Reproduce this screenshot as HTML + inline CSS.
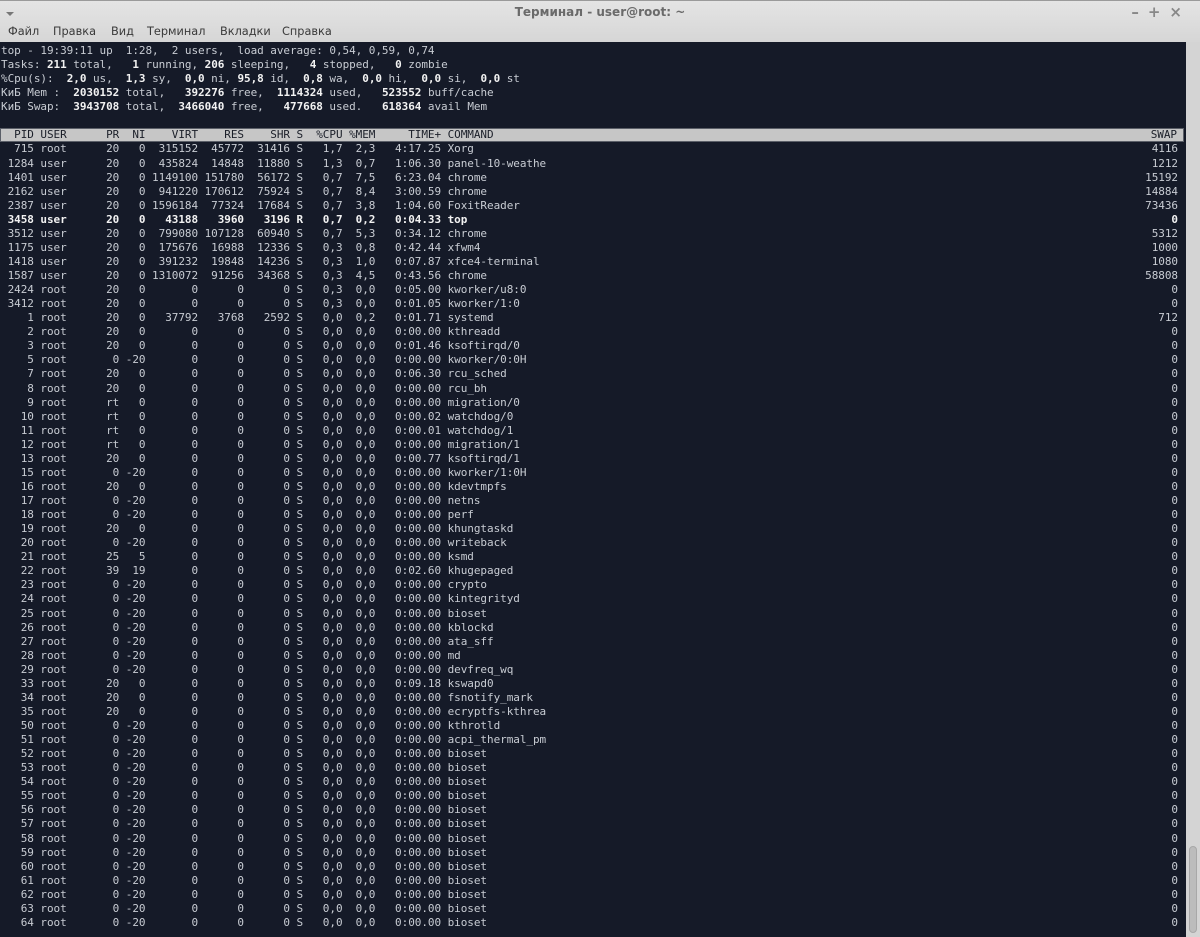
<!DOCTYPE html>
<html><head><meta charset="utf-8"><style>
*{margin:0;padding:0;box-sizing:border-box}
html,body{width:1200px;height:937px;overflow:hidden;background:#d8d8d8;font-family:"DejaVu Sans","Liberation Sans",sans-serif}
#top{position:absolute;left:0;top:0;width:1200px;height:42px;background:linear-gradient(#e4e4e4,#d6d6d6);border-top:1px solid #9a9a9a}
#title{position:absolute;left:0;width:1200px;top:4px;text-align:center;font-size:12px;font-weight:bold;color:#6a6a6a}
#arrow{position:absolute;left:6px;top:11px;width:0;height:0;border-left:4px solid transparent;border-right:4px solid transparent;border-top:4px solid #777}
#ctl{position:absolute;right:9px;top:2px;font-size:15px;color:#888;letter-spacing:9px;font-weight:bold}
#menu{position:absolute;top:24px;font-size:11.3px;color:#3a3a3a}
#menu span{position:absolute;white-space:nowrap}
#term{position:absolute;left:0;top:42px;width:1186px;height:895px;background:#151a28}
#sb{position:absolute;left:1186px;top:42px;width:14px;height:895px;background:#d4d4d4}
#thumb{position:absolute;left:3px;top:804px;width:8px;height:87px;background:#bcbcbc;border-radius:4px;border:1px solid #a8a8a8}
pre{position:absolute;left:1px;top:44px;width:1177px;font-family:"DejaVu Sans Mono","Liberation Mono",monospace;font-size:11px;letter-spacing:-0.055px;line-height:14.07px;color:#c8ccd3;white-space:pre}
pre div{height:14.07px}
b{color:#f2f2f2}
.r{float:right}
.h{background:#c6c6c6;color:#1a1e28;margin-left:-1px;padding-left:1px;width:1184px;box-shadow:0 0 0 1px #5b5f68 inset}
.h .r{margin-right:7px}
</style></head><body>
<div id="top"><div id="arrow"></div><div id="title">Терминал - user@root: ~</div><div id="ctl">–+×</div>
<div id="menu"><span style="left:8px">Файл</span><span style="left:53px">Правка</span><span style="left:111px">Вид</span><span style="left:147px">Терминал</span><span style="left:220px">Вкладки</span><span style="left:282px">Справка</span></div></div>
<div id="term"></div>
<div id="sb"><div id="thumb"></div></div>
<pre><div>top - 19:39:11 up  1:28,  2 users,  load average: 0,54, 0,59, 0,74</div><div>Tasks: <b>211</b> total,   <b>1</b> running, <b>206</b> sleeping,   <b>4</b> stopped,   <b>0</b> zombie</div><div>%Cpu(s):  <b>2,0</b> us,  <b>1,3</b> sy,  <b>0,0</b> ni, <b>95,8</b> id,  <b>0,8</b> wa,  <b>0,0</b> hi,  <b>0,0</b> si,  <b>0,0</b> st</div><div>КиБ Mem :  <b>2030152</b> total,   <b>392276</b> free,  <b>1114324</b> used,   <b>523552</b> buff/cache</div><div>КиБ Swap:  <b>3943708</b> total,  <b>3466040</b> free,   <b>477668</b> used.   <b>618364</b> avail Mem</div><div> </div><div class="h"><span class="r">SWAP</span>  PID USER      PR  NI    VIRT    RES    SHR S  %CPU %MEM     TIME+ COMMAND</div><div><span class="r">4116</span>  715 root      20   0  315152  45772  31416 S   1,7  2,3   4:17.25 Xorg</div><div><span class="r">1212</span> 1284 user      20   0  435824  14848  11880 S   1,3  0,7   1:06.30 panel-10-weathe</div><div><span class="r">15192</span> 1401 user      20   0 1149100 151780  56172 S   0,7  7,5   6:23.04 chrome</div><div><span class="r">14884</span> 2162 user      20   0  941220 170612  75924 S   0,7  8,4   3:00.59 chrome</div><div><span class="r">73436</span> 2387 user      20   0 1596184  77324  17684 S   0,7  3,8   1:04.60 FoxitReader</div><div><b><span class="r">0</span> 3458 user      20   0   43188   3960   3196 R   0,7  0,2   0:04.33 top</b></div><div><span class="r">5312</span> 3512 user      20   0  799080 107128  60940 S   0,7  5,3   0:34.12 chrome</div><div><span class="r">1000</span> 1175 user      20   0  175676  16988  12336 S   0,3  0,8   0:42.44 xfwm4</div><div><span class="r">1080</span> 1418 user      20   0  391232  19848  14236 S   0,3  1,0   0:07.87 xfce4-terminal</div><div><span class="r">58808</span> 1587 user      20   0 1310072  91256  34368 S   0,3  4,5   0:43.56 chrome</div><div><span class="r">0</span> 2424 root      20   0       0      0      0 S   0,3  0,0   0:05.00 kworker/u8:0</div><div><span class="r">0</span> 3412 root      20   0       0      0      0 S   0,3  0,0   0:01.05 kworker/1:0</div><div><span class="r">712</span>    1 root      20   0   37792   3768   2592 S   0,0  0,2   0:01.71 systemd</div><div><span class="r">0</span>    2 root      20   0       0      0      0 S   0,0  0,0   0:00.00 kthreadd</div><div><span class="r">0</span>    3 root      20   0       0      0      0 S   0,0  0,0   0:01.46 ksoftirqd/0</div><div><span class="r">0</span>    5 root       0 -20       0      0      0 S   0,0  0,0   0:00.00 kworker/0:0H</div><div><span class="r">0</span>    7 root      20   0       0      0      0 S   0,0  0,0   0:06.30 rcu_sched</div><div><span class="r">0</span>    8 root      20   0       0      0      0 S   0,0  0,0   0:00.00 rcu_bh</div><div><span class="r">0</span>    9 root      rt   0       0      0      0 S   0,0  0,0   0:00.00 migration/0</div><div><span class="r">0</span>   10 root      rt   0       0      0      0 S   0,0  0,0   0:00.02 watchdog/0</div><div><span class="r">0</span>   11 root      rt   0       0      0      0 S   0,0  0,0   0:00.01 watchdog/1</div><div><span class="r">0</span>   12 root      rt   0       0      0      0 S   0,0  0,0   0:00.00 migration/1</div><div><span class="r">0</span>   13 root      20   0       0      0      0 S   0,0  0,0   0:00.77 ksoftirqd/1</div><div><span class="r">0</span>   15 root       0 -20       0      0      0 S   0,0  0,0   0:00.00 kworker/1:0H</div><div><span class="r">0</span>   16 root      20   0       0      0      0 S   0,0  0,0   0:00.00 kdevtmpfs</div><div><span class="r">0</span>   17 root       0 -20       0      0      0 S   0,0  0,0   0:00.00 netns</div><div><span class="r">0</span>   18 root       0 -20       0      0      0 S   0,0  0,0   0:00.00 perf</div><div><span class="r">0</span>   19 root      20   0       0      0      0 S   0,0  0,0   0:00.00 khungtaskd</div><div><span class="r">0</span>   20 root       0 -20       0      0      0 S   0,0  0,0   0:00.00 writeback</div><div><span class="r">0</span>   21 root      25   5       0      0      0 S   0,0  0,0   0:00.00 ksmd</div><div><span class="r">0</span>   22 root      39  19       0      0      0 S   0,0  0,0   0:02.60 khugepaged</div><div><span class="r">0</span>   23 root       0 -20       0      0      0 S   0,0  0,0   0:00.00 crypto</div><div><span class="r">0</span>   24 root       0 -20       0      0      0 S   0,0  0,0   0:00.00 kintegrityd</div><div><span class="r">0</span>   25 root       0 -20       0      0      0 S   0,0  0,0   0:00.00 bioset</div><div><span class="r">0</span>   26 root       0 -20       0      0      0 S   0,0  0,0   0:00.00 kblockd</div><div><span class="r">0</span>   27 root       0 -20       0      0      0 S   0,0  0,0   0:00.00 ata_sff</div><div><span class="r">0</span>   28 root       0 -20       0      0      0 S   0,0  0,0   0:00.00 md</div><div><span class="r">0</span>   29 root       0 -20       0      0      0 S   0,0  0,0   0:00.00 devfreq_wq</div><div><span class="r">0</span>   33 root      20   0       0      0      0 S   0,0  0,0   0:09.18 kswapd0</div><div><span class="r">0</span>   34 root      20   0       0      0      0 S   0,0  0,0   0:00.00 fsnotify_mark</div><div><span class="r">0</span>   35 root      20   0       0      0      0 S   0,0  0,0   0:00.00 ecryptfs-kthrea</div><div><span class="r">0</span>   50 root       0 -20       0      0      0 S   0,0  0,0   0:00.00 kthrotld</div><div><span class="r">0</span>   51 root       0 -20       0      0      0 S   0,0  0,0   0:00.00 acpi_thermal_pm</div><div><span class="r">0</span>   52 root       0 -20       0      0      0 S   0,0  0,0   0:00.00 bioset</div><div><span class="r">0</span>   53 root       0 -20       0      0      0 S   0,0  0,0   0:00.00 bioset</div><div><span class="r">0</span>   54 root       0 -20       0      0      0 S   0,0  0,0   0:00.00 bioset</div><div><span class="r">0</span>   55 root       0 -20       0      0      0 S   0,0  0,0   0:00.00 bioset</div><div><span class="r">0</span>   56 root       0 -20       0      0      0 S   0,0  0,0   0:00.00 bioset</div><div><span class="r">0</span>   57 root       0 -20       0      0      0 S   0,0  0,0   0:00.00 bioset</div><div><span class="r">0</span>   58 root       0 -20       0      0      0 S   0,0  0,0   0:00.00 bioset</div><div><span class="r">0</span>   59 root       0 -20       0      0      0 S   0,0  0,0   0:00.00 bioset</div><div><span class="r">0</span>   60 root       0 -20       0      0      0 S   0,0  0,0   0:00.00 bioset</div><div><span class="r">0</span>   61 root       0 -20       0      0      0 S   0,0  0,0   0:00.00 bioset</div><div><span class="r">0</span>   62 root       0 -20       0      0      0 S   0,0  0,0   0:00.00 bioset</div><div><span class="r">0</span>   63 root       0 -20       0      0      0 S   0,0  0,0   0:00.00 bioset</div><div><span class="r">0</span>   64 root       0 -20       0      0      0 S   0,0  0,0   0:00.00 bioset</div></pre>
</body></html>
